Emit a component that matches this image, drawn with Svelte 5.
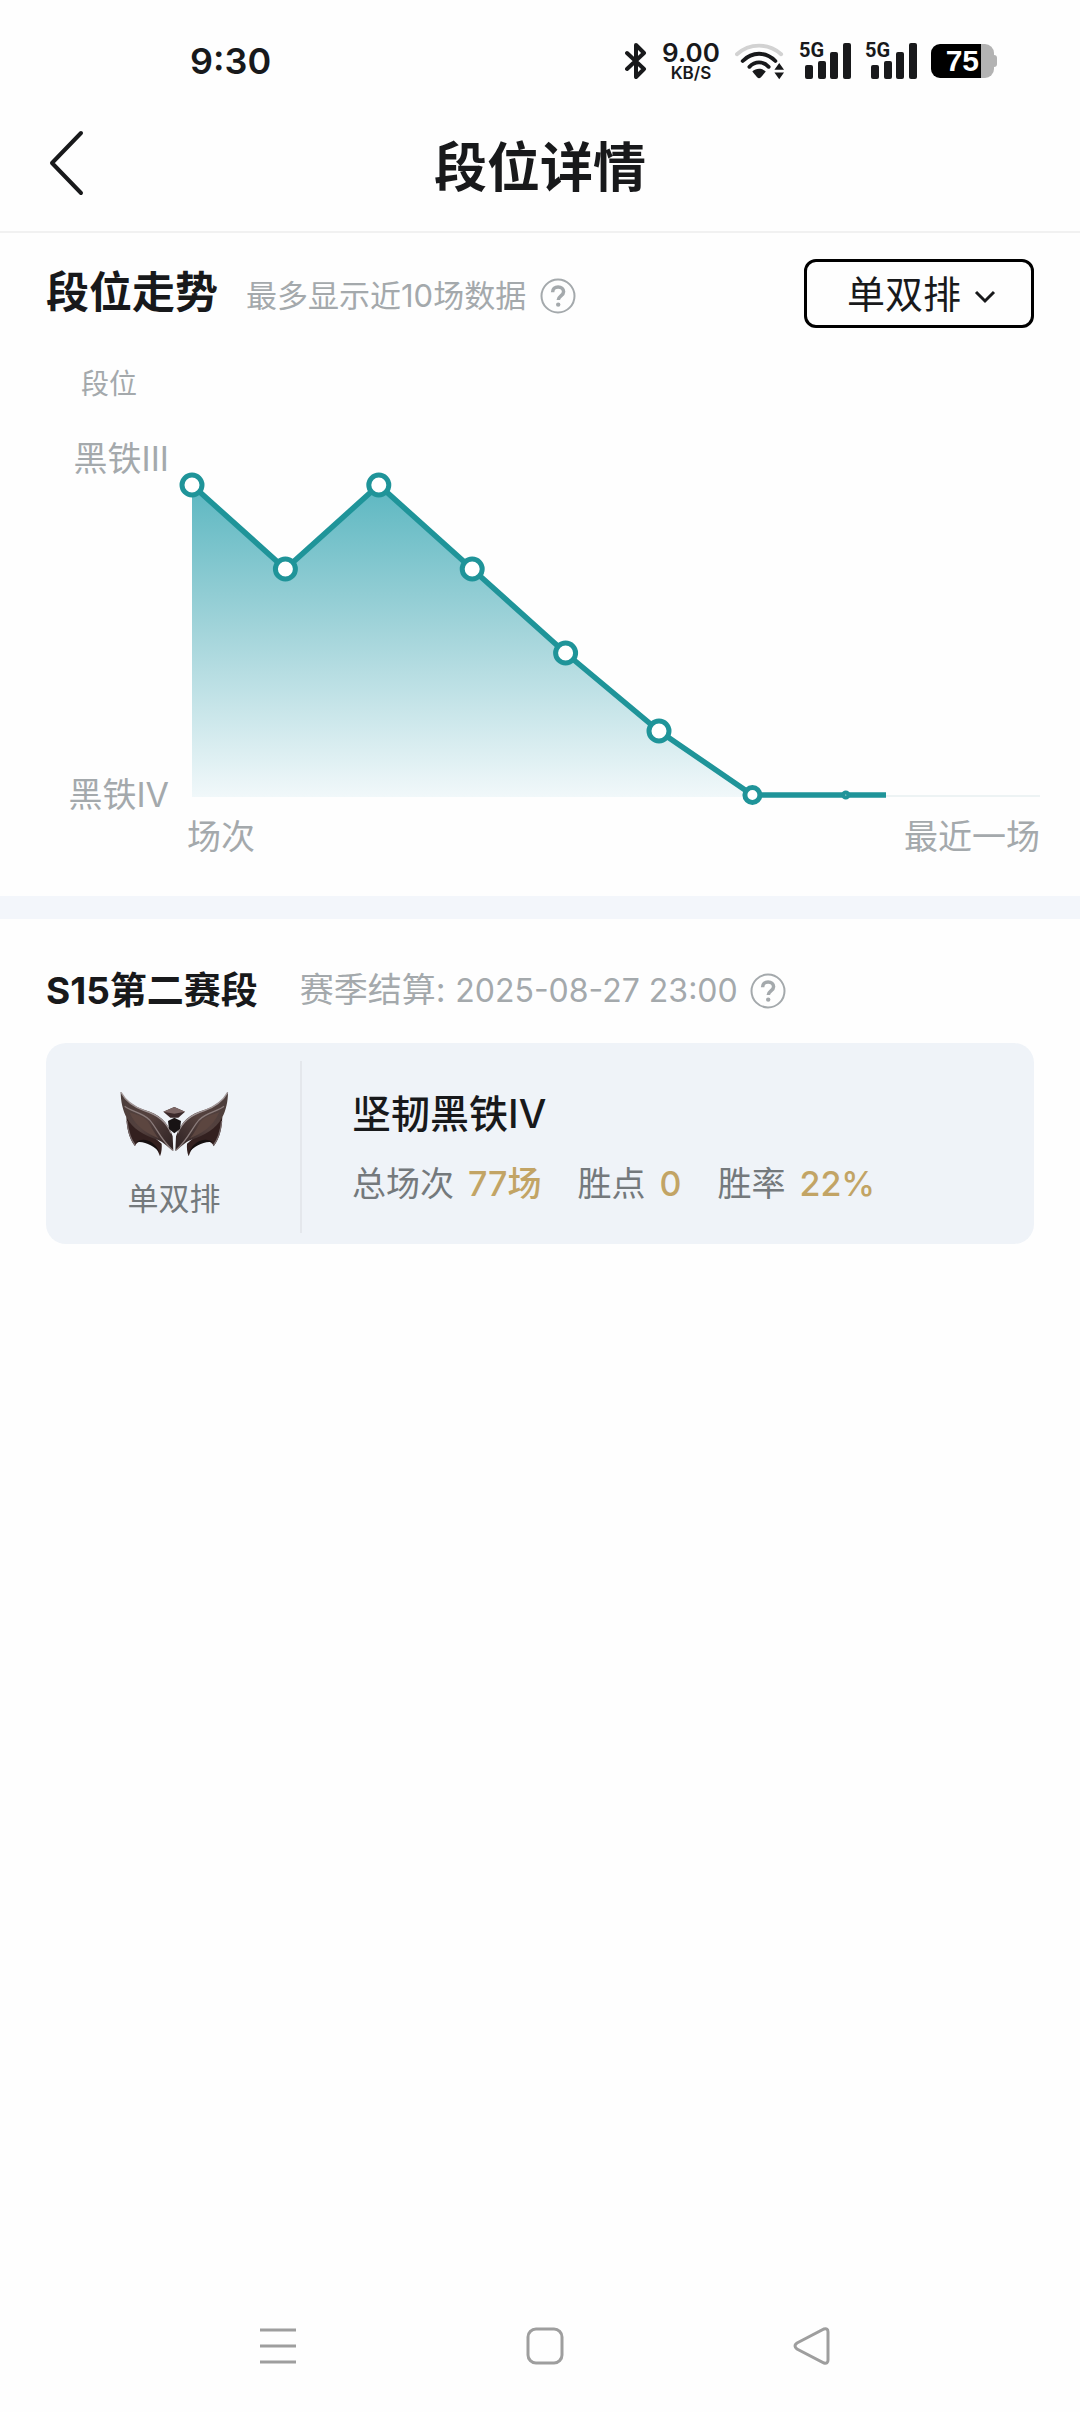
<script>
	let queue = "solo";
	const scores = [310, 226, 310, 226, 142, 64, 0, 0];
	const left = 13;
	const step = 93.4;
	const base = 329;
	const end = 707;

	let points = scores.map((score, i) => ({
		x: left + i * step,
		y: base - score,
		r: i < 6 ? 10 : i === 6 ? 7.5 : 2,
	}));
	let line = points.map((p) => `${p.x},${p.y}`).join(" ") + ` ${end},${base}`;
	let area = `${left},${base + 2} ${line} ${end},${base + 2}`;

	let stats = [
		{ label: "总场次", value: "77场" },
		{ label: "胜点", value: "0" },
		{ label: "胜率", value: "22%" },
	];
</script>

{#snippet help(label)}
	<button class="help" aria-label={label}>
		<svg viewBox="0 0 36 36" width="36" height="36">
			<circle cx="18" cy="18" r="16.5" />
			<path d="M12.6 14.2c0-3.2 2.3-5.2 5.5-5.2s5.5 2 5.5 4.8c0 4-5.3 4.2-5.3 8.2" />
			<circle class="dot" cx="18.2" cy="26.6" r="2.2" />
		</svg>
	</button>
{/snippet}

{#snippet signal()}
	<span class="signal">
		<span class="net">5G</span>
		<svg viewBox="0 0 52 38" width="52" height="38">
			<rect x="6" y="23" width="8" height="14" rx="2" />
			<rect x="19" y="19" width="8" height="18" rx="2" />
			<rect x="31" y="10" width="8" height="27" rx="2" />
			<rect x="44" y="1" width="8" height="36" rx="2" />
		</svg>
	</span>
{/snippet}

<div class="page">
	<div class="status">
		<time>9:30</time>
		<div class="status-icons">
			<svg viewBox="0 0 22 38" width="22" height="38">
				<path class="bt" d="M2 11l17 16-8 8V3l8 8L2 27" />
			</svg>
			<span class="speed"><b>9.00</b><small>KB/S</small></span>
			<svg class="wifi" viewBox="0 0 52 38" width="50" height="38">
				<path class="weak" d="M2 12C15 0 35 0 48 12" />
				<path d="M8 19C18 9 32 9 42 19" />
				<path d="M15 25C21 19 29 19 35 25" />
				<path class="solid" d="M18 30c4-4 10-4 14 0l-5 6q-2 2-4 0z" />
				<path class="solid" d="M41 28l5-7 5 7zM41 31h10l-5 7z" />
			</svg>
			{@render signal()}
			{@render signal()}
			<span class="battery">75</span>
		</div>
	</div>

	<header>
		<button class="back" aria-label="返回">
			<svg viewBox="0 0 36 66" width="36" height="66"><path d="M33 3L4 33l29 30" /></svg>
		</button>
		<h1>段位详情</h1>
	</header>

	<section class="trend">
		<div class="row">
			<h2>段位走势</h2>
			<div class="note">
				<p>最多显示近10场数据</p>
				{@render help("走势说明")}
			</div>
			<div class="picker">
				<select bind:value={queue} aria-label="队列">
					<option value="solo">单双排</option>
				</select>
				<svg viewBox="0 0 22 16" width="22" height="16"><path d="M2 3l9 9 9-9" /></svg>
			</div>
		</div>

		<p class="axis-name">段位</p>
		<div class="chart">
			<div class="ticks">
				<span>黑铁III</span>
				<span>黑铁IV</span>
			</div>
			<svg class="plot" viewBox="0 0 861 342">
				<defs>
					<linearGradient id="fade" gradientUnits="userSpaceOnUse" x1="0" y1="19" x2="0" y2="331">
						<stop offset="0" stop-color="#5cb7c1" />
						<stop offset="0.45" stop-color="#a0d3d9" />
						<stop offset="1" stop-color="#f1f8fa" />
					</linearGradient>
				</defs>
				<path class="axis" d="M{end} 330H861" />
				<polygon fill="url(#fade)" points={area} />
				<polyline class="line" points={line} />
				{#each points as p}
					<circle class="point" cx={p.x} cy={p.y} r={p.r} />
				{/each}
			</svg>
			<div class="x-labels">
				<span>场次</span>
				<span>最近一场</span>
			</div>
		</div>
	</section>

	<section class="season">
		<div class="row">
			<h3>S15第二赛段</h3>
			<p class="settle">赛季结算: <time>2025-08-27 23:00</time></p>
			{@render help("赛季说明")}
		</div>

		<div class="card">
			<div class="rank">
				<svg viewBox="54 54 336 210" width="112" height="70">
					<defs>
						<linearGradient id="wing" x1="0" y1="0" x2="1" y2="1">
							<stop offset="0" stop-color="#4a3d3b" />
							<stop offset="0.5" stop-color="#54413e" />
							<stop offset="1" stop-color="#2c2021" />
						</linearGradient>
						<g id="half">
							<path fill="#33201f" d="M79 138c2 30 5 60 26 88 5-14 18-16 34-13 20 3 32 16 41 43 5-12 6-26 5-38l-60-52z" />
							<path fill="none" stroke="#77696a" stroke-width="4" d="M81 150c3 30 9 52 24 72" />
							<path fill="#150f10" d="M108 214c14-12 50-14 71 30-16-18-46-36-71-30z" />
							<path fill="url(#wing)" d="M62 62c14 26 36 42 70 54 44 12 72 36 86 80l2 44c-16-12-28-26-48-34-40-14-74-32-92-66-12-22-18-50-18-78z" />
							<path fill="none" stroke="#a19697" stroke-width="4" d="M63 64c14 26 38 43 70 55 40 12 66 32 80 68" />
							<path fill="none" stroke="#8a7c7b" stroke-width="4" d="M74 106c20 16 52 18 74 40 22 24 32 58 70 92" />
							<path fill="#5c4640" d="M88 124c26 8 48 14 60 34 10 18 18 32 28 44-32-14-66-30-88-78z" />
						</g>
					</defs>
					<use href="#half" />
					<use href="#half" transform="matrix(-1 0 0 1 446 0)" />
					<path fill="#3b292a" d="M190 122l33-14 32 14-20 18h-24z" />
					<path fill="#7c6665" d="M190 122l33-14 32 14-32 6z" />
					<path fill="#181314" d="M204 150l19-10 20 10-3 24-17 13-16-13z" />
				</svg>
				<span>单双排</span>
			</div>
			<div class="info">
				<h4>坚韧黑铁IV</h4>
				<dl>
					{#each stats as { label, value }}
						<div>
							<dt>{label}</dt>
							<dd>{value}</dd>
						</div>
					{/each}
				</dl>
			</div>
		</div>
	</section>

	<nav>
		<button aria-label="最近任务">
			<svg viewBox="0 0 38 38" width="38" height="38"><path d="M1 3h36M1 19h36M1 35h36" /></svg>
		</button>
		<button aria-label="主页">
			<svg viewBox="0 0 38 38" width="38" height="38"><rect x="2" y="2" width="34" height="34" rx="8" /></svg>
		</button>
		<button aria-label="返回上一页">
			<svg viewBox="0 0 38 38" width="38" height="38"><path d="M4 16L31 2q4-1 4 3v28q0 4-4 3L4 22q-4-3 0-6z" /></svg>
		</button>
	</nav>
</div>

<style>
	:global(body) {
		margin: 0;
		background: #fefefe;
	}
	.page {
		display: flex;
		flex-direction: column;
		min-height: 100vh;
		color: #18191b;
		font-family: Inter, "Noto Sans CJK SC", sans-serif;
	}
	h1,
	h2,
	h3,
	h4,
	p,
	dl,
	dd {
		margin: 0;
	}
	button {
		display: flex;
		padding: 0;
		border: none;
		background: none;
		cursor: pointer;
	}
	svg {
		display: block;
		flex-shrink: 0;
	}

	.status {
		display: flex;
		justify-content: space-between;
		align-items: center;
		height: 122px;
		padding: 0 86px 0 190px;
	}
	.status time {
		font-size: 36px;
		font-weight: 600;
	}
	.status-icons {
		display: flex;
		align-items: center;
		gap: 14px;
	}
	.bt {
		fill: none;
		stroke: #18191b;
		stroke-width: 4;
		stroke-linejoin: round;
		stroke-linecap: round;
	}
	.speed {
		display: flex;
		flex-direction: column;
		align-items: center;
		width: 60px;
	}
	.speed b {
		font-size: 26px;
		line-height: 24px;
		font-weight: 600;
	}
	.speed small {
		font-size: 17px;
		line-height: 16px;
		font-weight: 600;
	}
	.wifi path {
		fill: none;
		stroke: #18191b;
		stroke-width: 4;
		stroke-linecap: round;
	}
	.wifi .weak {
		stroke: #d2d2d2;
	}
	.wifi .solid {
		fill: #18191b;
		stroke: none;
	}
	.signal {
		position: relative;
		fill: #18191b;
	}
	.net {
		position: absolute;
		top: -2px;
		left: 0;
		font: 700 20px/20px Roboto, sans-serif;
	}
	.battery {
		position: relative;
		width: 48px;
		height: 34px;
		padding-right: 15px;
		border-radius: 9px;
		background: linear-gradient(90deg, #000 50px, #b3b3b3 50px);
		color: #fff;
		font: 700 30px/34px "Liberation Sans", sans-serif;
		text-align: right;
	}
	.battery::after {
		content: "";
		position: absolute;
		top: 11px;
		right: -3px;
		width: 4px;
		height: 12px;
		border-radius: 0 3px 3px 0;
		background: #b3b3b3;
	}

	header {
		display: grid;
		grid-template-columns: 1fr auto 1fr;
		align-items: center;
		height: 109px;
		padding: 0 48px;
		border-bottom: 2px solid #f1f1f1;
	}
	.back {
		width: 36px;
		margin-bottom: 28px;
	}
	.back path {
		fill: none;
		stroke: #18191b;
		stroke-width: 4;
		stroke-linecap: round;
		stroke-linejoin: round;
	}
	h1 {
		margin-bottom: 18px;
		font-size: 53px;
		line-height: 80px;
	}

	.row {
		display: flex;
		align-items: center;
	}
	.help svg {
		fill: none;
		stroke: #a4a9ac;
		stroke-width: 2;
	}
	.help path {
		stroke-width: 3.5;
	}
	.help .dot {
		fill: #a4a9ac;
		stroke: none;
	}

	.trend {
		padding: 26px 46px 36px;
		border-bottom: 23px solid #f3f6fb;
	}
	h2 {
		margin-bottom: 4px;
		font-size: 43px;
		line-height: 64px;
	}
	.note {
		display: flex;
		align-items: center;
		gap: 14px;
		margin: 4px 0 0 28px;
		color: #a4a9ac;
		font-size: 31px;
		line-height: 46px;
	}
	.picker {
		position: relative;
		width: 230px;
		margin-left: auto;
	}
	select {
		appearance: none;
		width: 100%;
		height: 69px;
		padding: 0 40px 4px;
		border: 3px solid #000;
		border-radius: 12px;
		background: #fefefe;
		color: #18191b;
		font: 38px/52px "Noto Sans CJK SC", sans-serif;
	}
	.picker svg {
		position: absolute;
		top: 30px;
		right: 38px;
		fill: none;
		stroke: #18191b;
		stroke-width: 3;
		pointer-events: none;
	}
	.axis-name {
		margin: 36px 0 34px 35px;
		color: #a4a9ac;
		font-size: 28px;
		line-height: 40px;
	}
	.chart {
		display: grid;
		grid-template-columns: 123px 1fr;
		column-gap: 10px;
		margin-right: -6px;
		color: #a4a9ac;
		font-size: 34px;
		line-height: 46px;
	}
	.ticks {
		display: flex;
		flex-direction: column;
		justify-content: space-between;
		margin: -2px 0 -10px;
		text-align: right;
	}
	.plot {
		width: 100%;
		margin-top: 28px;
	}
	.axis {
		stroke: #edf3f4;
		stroke-width: 2;
	}
	.line {
		fill: none;
		stroke: #1f9499;
		stroke-width: 5.5;
	}
	.point {
		fill: #fff;
		stroke: #1f9499;
		stroke-width: 5;
	}
	.x-labels {
		grid-column: 2;
		display: flex;
		justify-content: space-between;
		padding: 6px 0 0 8px;
	}

	.season {
		padding: 47px 46px 0;
	}
	h3 {
		font-size: 37px;
		line-height: 48px;
	}
	.settle {
		margin: 0 12px 0 42px;
		color: #a4a9ac;
		font-size: 34px;
		line-height: 48px;
	}
	.settle time {
		font-size: 32px;
	}
	.card {
		display: flex;
		align-items: center;
		height: 195px;
		margin-top: 28px;
		padding-top: 6px;
		border-radius: 20px;
		background: #eff3f8;
	}
	.rank {
		display: flex;
		flex-direction: column;
		align-items: center;
		gap: 17px;
		width: 252px;
		padding: 28px 0 11px 2px;
		border-right: 2px solid #e4e7ec;
		color: #74797c;
		font-size: 31px;
		line-height: 46px;
	}
	.info {
		padding-left: 50px;
	}
	h4 {
		font-size: 39px;
		line-height: 56px;
		font-weight: 500;
	}
	dl {
		display: flex;
		gap: 36px;
		margin-top: 18px;
		font-size: 34px;
		line-height: 48px;
	}
	dl div {
		display: flex;
		gap: 14px;
	}
	dt {
		color: #74797c;
	}
	dd {
		color: #c2a465;
		font-weight: 500;
	}

	nav {
		display: grid;
		grid-template-columns: repeat(3, 1fr);
		justify-items: center;
		margin-top: auto;
		padding: 40px 134px 47px 144px;
	}
	nav svg {
		fill: none;
		stroke: #9e9e9e;
		stroke-width: 3;
	}
</style>
